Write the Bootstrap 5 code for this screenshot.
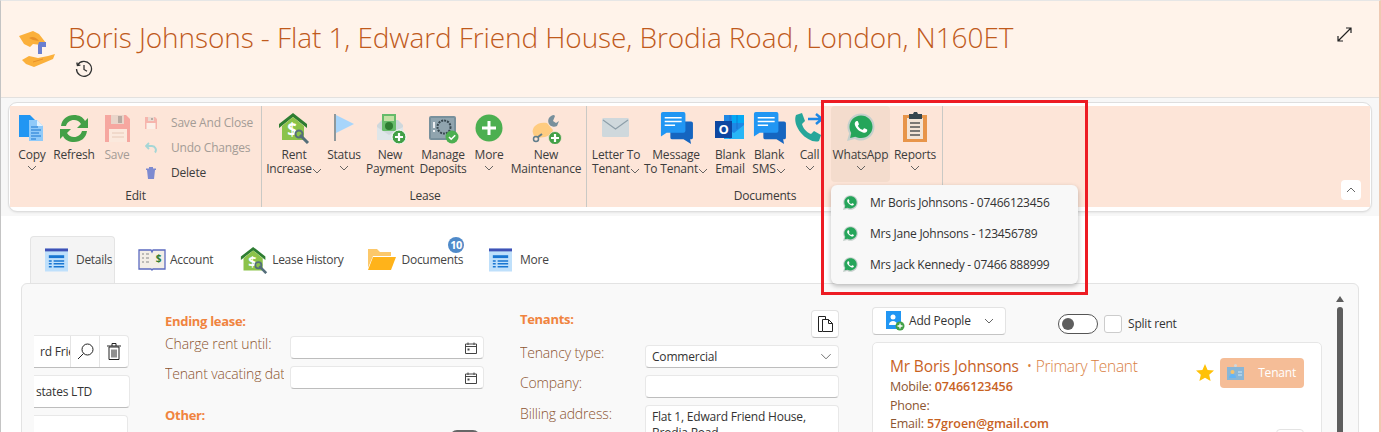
<!DOCTYPE html>
<html lang="en">
<head>
<meta charset="utf-8">
<title>Boris Johnsons</title>
<link href="https://cdn.jsdelivr.net/npm/bootstrap@5.3.0/dist/css/bootstrap.min.css" rel="stylesheet">
<style>
html,body{height:432px;overflow:hidden;background:#fff}
body{font-family:"Open Sans","Noto Sans",sans-serif;font-size:12px;color:#333;letter-spacing:-.2px}
.app-shell{position:relative;width:1381px;height:432px;overflow:hidden;border-left:1px solid #c4c4c4;border-top:1px solid #e6e6e6;border-right:2px solid #efc9b2}
.page-head{height:97px;background:#fff3ea;border-bottom:1px solid #e3e1df;padding:18px 0 0 15px}
.head-logo{width:40px;height:40px;margin-top:9px}
.head-title{font-size:28px;font-weight:300;line-height:36px;color:#c05a1c;margin:0 0 0 12px;letter-spacing:-.09px;white-space:nowrap}
.head-hist{margin:5px 0 0 19px;display:block}
.head-expand{position:absolute;right:27px;top:26px}
.rb-wrap{background:#f7f7f7;height:118px;padding:4px 7px 0 7px}
.rb-outer{background:#fff;height:110px;border:1px solid #dedede;border-radius:9px;padding:3px 1px;box-shadow:0 1px 2px #0001}
.rb-inner{background:#fde5d8;height:101px;position:relative}
.rb-group{height:101px;border-right:1px solid #c9c9c5;display:flex;flex-direction:column}
.rb-g1{width:252px;padding-left:2px}.rb-g2{width:325px;padding-left:4px}.rb-g3{width:356px;padding-left:3px}
.rb-items{display:flex;flex:1 1 auto;height:82px}
.rb-label{height:14px;line-height:14px;text-align:center;margin-bottom:4px;padding-right:2px;color:#3a3a3a}
.rb-btn{display:flex;flex-direction:column;align-items:center;text-align:center;padding-top:6px;height:76px;line-height:14px;color:#3c3c3c;white-space:nowrap;border-radius:4px}
.rb-ico{height:32px;width:36px;margin-bottom:4px;display:block}
.rb-btn.off{color:#a49c96}
.rb-active{background:#f4dccd}
.w39{width:40px}.w43{width:44px}.w42{width:42px}.w43b{width:43px}.w56{width:56px}.w44{width:44px}.w48{width:48px}.w58{width:58px}.w34{width:34px}.w80{width:80px}.w52{width:52px}.w68{width:68px}.w40{width:40px}.w38{width:38px}.w59{width:59px}.w51{width:50px}
.chev{display:inline-block;vertical-align:-1px}
.chev-solo{display:block;margin-top:3px}
.rb-small{padding:4px 0 0 7px}
.rb-row{height:25px;display:flex;align-items:center;color:#3c3c3c}
.rb-row.off{color:#a49c96}
.rb-row svg{margin-right:10px}
.rb-row span{margin-left:4px}
.rb-collapse{position:absolute;right:9px;bottom:7px;width:20px;height:20px;background:#fff;border-radius:4px;display:flex;align-items:center;justify-content:center}
.wa-menu{position:absolute;left:830px;top:184px;width:247px;height:99px;background:#f8f8f8;border-radius:6px;box-shadow:0 2px 5px #0004;padding:2px 0;z-index:5}
.wa-item{height:31px;display:flex;align-items:center;padding-left:12px;color:#333;letter-spacing:-.25px}
.wa-item svg{margin-right:12px}
.hilite{position:absolute;left:820px;top:99px;width:267px;height:195px;border:3px solid #ed1c24;z-index:6;pointer-events:none}
.tab-strip{display:flex;height:47px;margin:20px 0 0 29px;padding-left:0;align-items:stretch;letter-spacing:-.3px}
.tab-cell{display:flex;align-items:center;position:relative;color:#444;white-space:nowrap}
.tab-on{background:#f4f4f4;border:1px solid #e4e4e4;border-bottom:0;border-radius:4px 4px 0 0;width:85px;padding-left:14px}
.tab-cell svg{margin-right:8px}
.t2{margin-left:23px}.t3{margin-left:27px}.t4{margin-left:24px}.t5{margin-left:26px}
.tab-cell svg.icon-docs{margin-right:6px}
.tab-badge{position:absolute;right:-1px;top:1px;width:16px;height:16px;border-radius:50%;background:#4f8ac9;color:#fff;font-size:11px;font-weight:700;line-height:16px;text-align:center;letter-spacing:-.4px}
.work-panel{margin-left:20px;width:1338px;height:160px;background:#f9f9f9;border:1px solid #e3e3e3;border-radius:6px 6px 0 0;display:flex;padding-left:12px;position:relative;overflow:hidden}
.p-col1{width:96px;overflow:hidden;padding-top:51px;flex:none}
.p-col2{width:319px;margin-left:35px;flex:none}
.p-col3{width:319px;margin-left:36px;flex:none}
.p-col4{width:450px;margin-left:33px;flex:none}
.in-box{background:#fff;border:1px solid #e8e8e8;border-bottom:1px solid #bdbdbd;border-radius:4px;height:23px;display:flex;align-items:center;padding:0 6px;color:#333;white-space:nowrap}
.grp-box{width:105px;margin-left:-10px;height:33px;padding:0;overflow:hidden}
.grp-txt{width:45px;flex:none;overflow:hidden;padding-left:15px;margin-right:0}
.grp-cell{width:29px;height:100%;border-left:1px solid #e4e4e4;display:flex;align-items:center;justify-content:center;flex:none}
.box-a{width:106px;margin-left:-10px;height:33px;margin-top:7px;padding-left:11px}
.box-b{width:104px;margin-left:-10px;height:33px;margin-top:7px}
.sec-head{color:#f0843f;font-weight:700;font-size:13px;line-height:18px;letter-spacing:-.3px}
.form-line{display:flex;align-items:center;height:23px;margin-bottom:7px}
.lbl{width:125px;color:#8c5531;font-size:14px;font-weight:300;overflow:hidden;white-space:nowrap;flex:none;line-height:19px;letter-spacing:-.15px}
.lbl-up{position:relative;top:-4px}
.lbl-bill{margin-top:-1px}
.lbl-cut{width:119px;margin-right:6px}
.in-fill{flex:1 1 auto;justify-content:space-between}
.c2-top{height:52px;padding-top:28px}
.other-head{margin-top:17px}
.c3-top{padding-top:26px;height:61px;position:relative}
.copy-btn{position:absolute;right:0;top:26px;width:28px;height:28px;background:#fff;border:1px solid #e2e2e2;border-bottom-color:#bdbdbd;border-radius:4px;display:flex;align-items:center;justify-content:center}
.addr{height:60px;display:block;line-height:16px;padding:3px 6px}
.top-tools{display:flex;align-items:center;height:58px;padding:23px 0 7px}
.sw-group{display:flex;align-items:center;margin-top:6px}
.add-btn{width:134px;height:28px;background:#fff;border:1px solid #e3e3e3;border-bottom-color:#c4c4c4;border-radius:4px;display:flex;align-items:center;padding-left:13px;color:#333}
.add-btn svg.first{margin-right:4px}
.add-btn .chev{margin-left:13px}
.sw-pill{width:40px;height:20px;border:1px solid #555;border-radius:10px;background:#fff;margin-left:52px;position:relative;flex:none}
.sw-pill::before{content:"";position:absolute;left:3px;top:3px;width:12px;height:12px;background:#5e5e5e;border-radius:50%}
.chk-box{width:18px;height:18px;background:#fff;border:1px solid #ccc;border-radius:3px;margin:0 6px;flex:none}
.ten-card{background:#fff;border:1px solid #e6e6e6;border-radius:5px;height:120px;padding:12px 17px;position:relative}
.ten-name{font-size:15.5px;line-height:23px;color:#c8621f;letter-spacing:-.15px}
.ten-role{color:#d9803f;font-weight:300;letter-spacing:-.3px}
.ten-line{font-size:12.5px;line-height:18.5px;color:#8c5531;white-space:nowrap}
.ten-line b{color:#c8621f;font-weight:600;letter-spacing:-.05px}
.ten-tag{position:absolute;right:17px;top:15px;width:84px;height:30px;background:#f5bd97;border-radius:4px;color:#fff;display:flex;align-items:center;justify-content:flex-end;padding-right:8px}
.ten-tag svg{position:absolute;left:7px;top:6px}
.ten-star{position:absolute;right:107px;top:21px}
.ten-mini{position:absolute;right:17px;top:86px;width:28px;height:28px;border:1px solid #e3e3e3;border-radius:4px;background:#fff}
.sb-thumb{position:absolute;left:1315px;top:23px;width:6px;height:140px;background:#5e5e5e;border-radius:3px}
.sb-arrow{position:absolute;left:1314px;top:12px}
.other-sw{position:absolute;left:428px;top:146px;width:30px;height:12px;background:#666;border-radius:7px 7px 0 0}
.sym-defs{position:absolute;width:0;height:0}
</style>
</head>
<body>
<svg class="sym-defs">
<defs>
<symbol id="i-wa" viewBox="-1 -1 18 18"><path fill="#c5d0cc" d="M8-.7C3.200-.7-.7 3.200-.7 7.900c0 1.500.400 3 1.100 4.300L-1 17l5-1.300c1.200.7 2.600 1 4 1 4.800 0 8.700-3.900 8.700-8.800S12.800-.700 8-.700z"/><path fill="#25a55a" d="M8 .6C3.900.6.600 3.900.600 7.900c0 1.400.400 2.700 1.100 3.900L1 15l3.300-.8c1.100.6 2.400.9 3.700.9 4.100 0 7.400-3.300 7.400-7.300S12.100.600 8 .600z"/><path fill="#fff" d="M11.615 9.500c-.197-.1-1.170-.578-1.353-.646-.182-.065-.315-.1-.445.1-.133.197-.513.646-.627.775-.114.133-.232.148-.43.050-.197-.1-.836-.308-1.592-.985-.590-.525-.985-1.175-1.103-1.372-.114-.198-.011-.304.088-.403.087-.088.197-.232.296-.346.1-.114.133-.198.198-.33.065-.134.034-.248-.015-.347-.05-.1-.445-1.076-.612-1.470-.16-.389-.323-.335-.445-.34-.114-.007-.247-.007-.38-.007a.729.729 0 0 0-.529.247c-.182.198-.691.677-.691 1.654 0 .977.710 1.916.810 2.049.098.133 1.394 2.132 3.383 2.992.470.205.840.326 1.129.418.475.152.904.129 1.246.080.380-.058 1.171-.48 1.338-.943.164-.464.164-.860.114-.943-.049-.084-.182-.133-.38-.232z"/></symbol>
<symbol id="i-list" viewBox="0 0 24 24"><rect x="0" y="0" width="24" height="24" fill="#bfe0fb"/><rect width="24" height="3" fill="#3f51b5"/><rect x="4" y="7" width="16" height="3" fill="#1976d2"/><path d="M4 13h3M9 13h11M4 16h3M9 16h11M4 19h3M9 19h11" stroke="#1976d2" stroke-width="1.500"/></symbol>
<symbol id="i-house" viewBox="0 0 32 32"><path fill="#2e7d32" d="M15 1 1 12v4l14-11 14 11v-4z"/><path fill="#8bc34a" d="M4 14 15 5l11 9v14H4z"/><text x="14" y="24" font-size="17" font-weight="700" fill="#fff" text-anchor="middle" font-family="Open Sans,sans-serif">$</text><path d="m22 23 8 8" stroke="#546e7a" stroke-width="3"/><circle cx="21" cy="22" r="3.500" fill="none" stroke="#546e7a" stroke-width="2"/></symbol>
<symbol id="i-bubbles" viewBox="0 0 34 34"><path fill="#1565c0" d="M10 10h22a2 2 0 0 1 2 2v15a2 2 0 0 1-2 2h-1l1 5-8-5H12a2 2 0 0 1-2-2z"/><path fill="#2196f3" d="M2 0h22a2 2 0 0 1 2 2v18a2 2 0 0 1-2 2H6l-6 4V2a2 2 0 0 1 2-2z"/><path d="M4 6h18M4 10h18M4 14h11" stroke="#fff" stroke-width="1.600"/></symbol>
<symbol id="i-chev" viewBox="0 0 10 6"><path d="m1 1 4 4 4-4" fill="none" stroke="#555" stroke-width=".9"/></symbol>
<symbol id="i-cal" viewBox="0 0 12 12"><path d="M.5 2h11v9.500H.5zM.5 4.500h11M3 .5v2.500M9 .5v2.500" fill="none" stroke="#444"/><rect x="2.500" y="6.500" width="2" height="2" fill="#444"/></symbol>
</defs>
</svg>
<div class="app-shell">
  <header class="page-head d-flex">
    <svg class="head-logo flex-none" viewBox="0 0 40 40"><path fill="#fbb03b" d="M3 8 17 3l6 3 7 9-5 2-8-1-3 3-6-3z"/><path fill="#e8912a" d="M13 10c3-2 7-1 10 3l-6-1z"/><path fill="#6a7fd0" d="M23 14h7v5h-4v7h-4v-9z"/><path fill="#fbb03b" d="M6 32l7-4 9 2 10-2 7-2-2 5-7 3-12 5-8-3z"/><path d="M17 34l10-3" stroke="#e8912a" fill="none"/></svg>
    <div>
      <h1 class="head-title">Boris Johnsons - Flat 1, Edward Friend House, Brodia Road, London, N160ET</h1>
      <svg class="head-hist" width="18" height="18" viewBox="0 0 18 18"><path d="M2.600 5A7.500 7.500 0 1 1 1.500 9M1.800 2.500l.6 3 3-.4M9 5v4.500l3 1.800" fill="none" stroke="#333" stroke-width="1.300"/></svg>
    </div>
    <svg class="head-expand" width="15" height="15" viewBox="0 0 15 15"><path d="M1 14 14 1M9 1h5v5M1 9v5h5" fill="none" stroke="#222" stroke-width="1.200"/></svg>
  </header>

  <div class="rb-wrap">
    <div class="rb-outer">
      <div class="rb-inner d-flex">
        <section class="rb-group rb-g1">
          <div class="rb-items">
            <div class="rb-btn w39"><svg class="rb-ico" viewBox="0 0 36 32"><path fill="#2196f3" d="M5 3h11l6 6v16H5z"/><path fill="#90caf9" d="M15 8h8l6 6v15H15z"/><path fill="#e3f2fd" d="M23 8l6 6h-6z"/><path d="M17 15h7M17 18h10M17 21h8M17 24h10M17 27h5" stroke="#1976d2" stroke-width="1.200"/></svg><span>Copy</span><svg class="chev chev-solo" width="10" height="6"><use href="#i-chev"/></svg></div>
            <div class="rb-btn w43"><svg class="rb-ico" viewBox="0 0 36 32"><path fill="#43a047" d="M18 3c5 0 9 2 11 6l3-3v10H21l4-4c-1.500-2.500-4-4-7-4-4 0-7 2.500-8 6H5c1-7 6-11 13-11z"/><path fill="#43a047" d="M18 30c-5 0-9-2-11-6l-3 3V17h11l-4 4c1.500 2.500 4 4 7 4 4 0 7-2.500 8-6h5c-1 7-6 11-13 11z"/></svg><span>Refresh</span></div>
            <div class="rb-btn w42 off"><svg class="rb-ico" viewBox="0 0 36 32"><path fill="#f6a7a0" d="M6 3h21l4 4v23H6z"/><rect x="12" y="3" width="13" height="9" fill="#e9d5ca"/><rect x="19" y="4" width="4" height="7" fill="#b7aaa2"/><rect x="10" y="17" width="18" height="13" fill="#fbe9dd"/><path d="M13 21h12M13 25h12" stroke="#e7c9b8"/></svg><span>Save</span></div>
            <div class="rb-small">
              <div class="rb-row off"><svg width="12" height="12" viewBox="0 0 12 12"><path fill="#f6b5ad" d="M0 0h10l2 2v10H0z"/><rect x="3" y="0" width="6" height="4" fill="#eadbd2"/><rect x="6" y="1" width="2" height="2" fill="#b7aaa2"/><rect x="1.500" y="6" width="9" height="6" fill="#fcefe7"/></svg><span>Save And Close</span></div>
              <div class="rb-row off"><svg width="12" height="12" viewBox="0 0 12 12"><path d="M4 1 1 4l3 3" fill="none" stroke="#a5d6d6" stroke-width="1.800"/><path d="M1.500 4H7a4 4 0 0 1 3 6.500" fill="none" stroke="#a5d6d6" stroke-width="2"/></svg><span>Undo Changes</span></div>
              <div class="rb-row"><svg width="12" height="12" viewBox="0 0 12 12"><path fill="#7d8ad0" d="M2 3h8l-1 9H3zM1 1.500h10V3H1zM4 0h4v1.500H4z"/></svg><span>Delete</span></div>
            </div>
          </div>
          <div class="rb-label">Edit</div>
        </section>
        <section class="rb-group rb-g2">
          <div class="rb-items">
            <div class="rb-btn w56"><svg class="rb-ico" viewBox="0 0 32 32"><use href="#i-house"/></svg><span>Rent</span><span>Increase<svg class="chev" width="10" height="6"><use href="#i-chev"/></svg></span></div>
            <div class="rb-btn w44"><svg class="rb-ico" viewBox="0 0 36 32"><path d="M9 2v27" stroke="#546e7a" stroke-width="1.300"/><path fill="#a7d5fb" d="M10 3l18 9-18 9z"/></svg><span>Status</span><svg class="chev chev-solo" width="10" height="6"><use href="#i-chev"/></svg></div>
            <div class="rb-btn w48"><svg class="rb-ico" viewBox="0 0 36 32"><path fill="#cfd8dc" d="M5 13 10 8h16l5 5v15H5z"/><rect x="10" y="2" width="14" height="17" fill="#66bb6a"/><rect x="12" y="4" width="10" height="5" fill="#c5e1a5"/><circle cx="17" cy="14" r="4" fill="#2e7d32"/><path fill="#dfe6e9" d="M5 15l12 8 14-8v13H5z"/><circle cx="27" cy="25" r="7" fill="#43a047" stroke="#fff" stroke-width="1"/><path d="M23 25h8M27 21v8" stroke="#fff" stroke-width="2.200"/></svg><span>New</span><span>Payment</span></div>
            <div class="rb-btn w58"><svg class="rb-ico" viewBox="0 0 36 32"><rect x="4" y="4" width="27" height="24" rx="2" fill="#78909c"/><rect x="6" y="6" width="23" height="20" fill="#90a4ae"/><circle cx="19" cy="15" r="6.500" fill="none" stroke="#37474f" stroke-width="2" stroke-dasharray="2 1"/><path d="M9 10v6M9 18v2" stroke="#eceff1" stroke-width="2"/><circle cx="27" cy="25" r="6.500" fill="#4caf50"/><path d="m24 25 2.200 2.200 4-4" fill="none" stroke="#fff" stroke-width="1.600"/></svg><span>Manage</span><span>Deposits</span></div>
            <div class="rb-btn w34"><svg class="rb-ico" viewBox="0 0 36 32"><circle cx="18" cy="16" r="13.500" fill="#4caf50"/><path d="M11 16h14M18 9v14" stroke="#fff" stroke-width="3"/></svg><span>More</span><svg class="chev chev-solo" width="10" height="6"><use href="#i-chev"/></svg></div>
            <div class="rb-btn w80"><svg class="rb-ico" viewBox="0 0 36 32"><path fill="#ffcc80" d="M6 15c3-4 8-5 13-4l6 7c-1 4-4 6-8 7l-8 1c-2-1-4-3-4-5-1-2 0-4 1-6z"/><circle cx="8" cy="27" r="2.500" fill="none" stroke="#607d8b" stroke-width="1.500"/><path d="m10 25 4-3" stroke="#607d8b" stroke-width="2"/><path fill="#78909c" d="M26 3a6 6 0 0 0-5 9 6 6 0 0 0 8 2l2-5-3 2-3-2 2-5z"/><circle cx="27" cy="26" r="6.500" fill="#43a047" stroke="#fde5d8" stroke-width=".8"/><path d="M23 26h8M27 22v8" stroke="#fff" stroke-width="2.200"/></svg><span>New</span><span>Maintenance</span></div>
          </div>
          <div class="rb-label">Lease</div>
        </section>
        <section class="rb-group rb-g3">
          <div class="rb-items">
            <div class="rb-btn w52"><svg class="rb-ico" viewBox="0 0 36 32"><rect x="4" y="6" width="27" height="19" rx="1.500" fill="#cfd8dc"/><path d="m5 8 12.500 9L30 8" fill="none" stroke="#8d9ea8" stroke-width="1.100"/></svg><span>Letter To</span><span>Tenant<svg class="chev" width="10" height="6"><use href="#i-chev"/></svg></span></div>
            <div class="rb-btn w68"><svg class="rb-ico" viewBox="-1 0 36 34"><use href="#i-bubbles"/></svg><span>Message</span><span>To Tenant<svg class="chev" width="10" height="6"><use href="#i-chev"/></svg></span></div>
            <div class="rb-btn w40"><svg class="rb-ico" viewBox="0 0 36 32"><rect x="12" y="3" width="20" height="24" fill="#1e88e5"/><rect x="20" y="3" width="12" height="8" fill="#03a9f4"/><path fill="#29b6f6" d="M12 16l10 5 10-8v14H12z"/><path d="M18 3v24M25 3v14" stroke="#1565c0" stroke-width=".6"/><rect x="3" y="9" width="17" height="17" fill="#0d47a1"/><text x="11.500" y="22" font-size="13" font-weight="700" fill="#fff" text-anchor="middle" font-family="Open Sans,sans-serif">O</text></svg><span>Blank</span><span>Email</span></div>
            <div class="rb-btn w38"><svg class="rb-ico" viewBox="-1 0 36 34"><use href="#i-bubbles"/></svg><span>Blank</span><span>SMS<svg class="chev" width="10" height="6"><use href="#i-chev"/></svg></span></div>
            <div class="rb-btn w43b"><svg class="rb-ico" viewBox="0 0 36 32"><path fill="#26a69a" d="M4 3l6-2 3 8-3 3c1 4 4 8 9 10l3-3 7 4-2 6c-5 2-13-2-18-8C4 15 2 8 4 3z"/><path d="M16 7h13M24 2l6 5-6 5" fill="none" stroke="#1e88e5" stroke-width="2.500"/></svg><span>Call</span><svg class="chev chev-solo" width="10" height="6"><use href="#i-chev"/></svg></div>
            <div class="rb-btn w59 rb-active"><svg class="rb-ico" width="32" height="32"><use href="#i-wa" x="4" y="1" width="28" height="28"/></svg><span>WhatsApp</span><svg class="chev chev-solo" width="10" height="6"><use href="#i-chev"/></svg></div>
            <div class="rb-btn w51"><svg class="rb-ico" viewBox="0 0 36 32"><rect x="6" y="3" width="24" height="27" fill="#e8954a"/><rect x="10" y="6" width="16" height="21" fill="#f3e4d6"/><path fill="#37474f" d="M12 2h4l1-2h3l1 2h4v5H12z"/><path d="M13 11h10M13 15h10M13 19h10M13 23h10" stroke="#555" stroke-width="1.500"/></svg><span>Reports</span><svg class="chev chev-solo" width="10" height="6"><use href="#i-chev"/></svg></div>
          </div>
          <div class="rb-label">Documents</div>
        </section>
        <div class="rb-collapse"><svg width="10" height="6"><use href="#i-chev" transform="matrix(1 0 0 -1 0 6)"/></svg></div>
      </div>
    </div>
  </div>

  <nav class="tab-strip">
    <div class="tab-cell tab-on"><svg width="23" height="24"><use href="#i-list"/></svg>Details</div>
    <div class="tab-cell t2"><svg width="28" height="22" viewBox="0 0 28 22" class="me-1"><path fill="#f3eee6" d="M1 1h12l1 2 1-2h12v19H15l-1 1-1-1H1z" stroke="#5c6bc0" stroke-width="1.300"/><path d="M4 5h2M8 5h3M4 9h2M8 9h3M4 13h2M8 13h3" stroke="#888" stroke-width="1.200"/><text x="20.500" y="13" font-size="10" font-weight="700" fill="#2e7d32" text-anchor="middle" font-family="Open Sans,sans-serif">$</text></svg>Account</div>
    <div class="tab-cell t3"><svg width="28" height="28" viewBox="0 0 32 32" class="me-1"><use href="#i-house"/></svg>Lease History</div>
    <div class="tab-cell t4"><svg class="icon-docs" width="28" height="21" viewBox="0 0 28 21"><path fill="#fcc86a" d="M0 0h9l3 3h11v4H5L0 19z"/><path fill="#ffb31a" d="M5 8h23l-5 13H0z"/></svg>Documents<span class="tab-badge">10</span></div>
    <div class="tab-cell t5"><svg width="23" height="24"><use href="#i-list"/></svg>More</div>
  </nav>

  <main class="work-panel">
    <div class="p-col1">
      <div class="in-box grp-box"><span class="grp-txt">rd Frie</span><span class="grp-cell"><svg width="17" height="17" viewBox="0 0 17 17"><circle cx="10.500" cy="6.500" r="5.500" fill="none" stroke="#222"/><path d="M6.500 10.500 1 16" stroke="#222"/></svg></span><span class="grp-cell"><svg width="14" height="17" viewBox="0 0 14 17"><path d="M2 4h10v12.500H2zM0 3h14M5 3V.5h4V3M5 6.500v8M7 6.500v8M9 6.500v8" fill="none" stroke="#222"/></svg></span></div>
      <div class="in-box box-a"><span>states LTD</span></div>
      <div class="in-box box-b"></div>
    </div>
    <div class="p-col2">
      <div class="c2-top sec-head">Ending lease:</div>
      <div class="form-line"><span class="lbl lbl-up">Charge rent until:</span><div class="in-box in-fill"><span></span><svg width="12" height="12"><use href="#i-cal"/></svg></div></div>
      <div class="form-line"><span class="lbl lbl-up lbl-cut">Tenant vacating dat</span><div class="in-box in-fill"><span></span><svg width="12" height="12"><use href="#i-cal"/></svg></div></div>
      <div class="sec-head other-head">Other:</div>
    </div>
    <div class="p-col3">
      <div class="c3-top"><span class="sec-head">Tenants:</span><span class="copy-btn"><svg width="15" height="16" viewBox="0 0 15 16"><path d="M.5.500h7v3M4 15.500H.5V.5M4.500 3.500h6l4 4v8h-10zM10.500 3.500v4h4" fill="none" stroke="#222"/></svg></span></div>
      <div class="form-line"><span class="lbl lbl-up">Tenancy type:</span><div class="in-box in-fill"><span>Commercial</span><svg width="12" height="7" viewBox="0 0 10 6"><path d="m1 1 4 4 4-4" fill="none" stroke="#666" stroke-width=".8"/></svg></div></div>
      <div class="form-line"><span class="lbl lbl-up">Company:</span><div class="in-box in-fill"></div></div>
      <div class="form-line align-items-start"><span class="lbl lbl-bill">Billing address:</span><div class="in-box in-fill addr">Flat 1, Edward Friend House,<br>Brodia Road</div></div>
    </div>
    <div class="p-col4">
      <div class="top-tools">
        <div class="add-btn"><svg class="first" width="19" height="20" viewBox="0 0 19 20"><rect width="15" height="18" fill="#2196f3"/><circle cx="7" cy="6" r="2.500" fill="#fff"/><path fill="#fff" d="M3 14c0-3 2-4 4-4s4 1 4 4z"/><circle cx="14" cy="15" r="4.500" fill="#43a047"/><path d="M11.500 15h5M14 12.500v5" stroke="#fff" stroke-width="1.300"/></svg>Add People<svg class="chev" width="10" height="6"><use href="#i-chev"/></svg></div>
        <div class="sw-group">
          <div class="sw-pill"></div>
          <div class="chk-box"></div>
          <span>Split rent</span>
        </div>
      </div>
      <article class="ten-card">
        <div class="ten-name">Mr Boris Johnsons <span class="ten-role">&nbsp;• Primary Tenant</span></div>
        <div class="ten-line">Mobile: <b>07466123456</b></div>
        <div class="ten-line">Phone:</div>
        <div class="ten-line">Email: <b>57groen@gmail.com</b></div>
        <svg class="ten-star" width="18" height="18" viewBox="0 0 18 18"><path fill="#ffc107" d="m9 0 2.600 6 6.400.6-4.800 4.200 1.400 6.300L9 13.800 3.400 17.100l1.400-6.300L0 6.600 6.400 6z"/></svg>
        <div class="ten-tag"><svg width="17" height="17" viewBox="0 0 17 17"><rect x="0" y="3" width="17" height="13" fill="#8ab6d6"/><circle cx="5.500" cy="8" r="2" fill="#f5c26b"/><path fill="#64b5f6" d="M2 14c0-3 2-4 3.500-4S9 11 9 14z"/><path d="M11 8h4M11 11h4" stroke="#cfe8f7"/><circle cx="8.500" cy="1.500" r="1.500" fill="#cfd8dc"/></svg>Tenant</div>
        <div class="ten-mini"></div>
      </article>
    </div>
    <svg class="sb-arrow" width="8" height="6" viewBox="0 0 8 6"><path fill="#5e5e5e" d="M4 0l4 6H0z"/></svg>
    <div class="sb-thumb"></div>
    <div class="other-sw"></div>
  </main>

  <div class="wa-menu">
    <div class="wa-item"><svg width="15" height="15"><use href="#i-wa"/></svg>Mr Boris Johnsons - 07466123456</div>
    <div class="wa-item"><svg width="15" height="15"><use href="#i-wa"/></svg>Mrs Jane Johnsons - 123456789</div>
    <div class="wa-item"><svg width="15" height="15"><use href="#i-wa"/></svg>Mrs Jack Kennedy - 07466 888999</div>
  </div>
  <div class="hilite"></div>
</div>
</body>
</html>
